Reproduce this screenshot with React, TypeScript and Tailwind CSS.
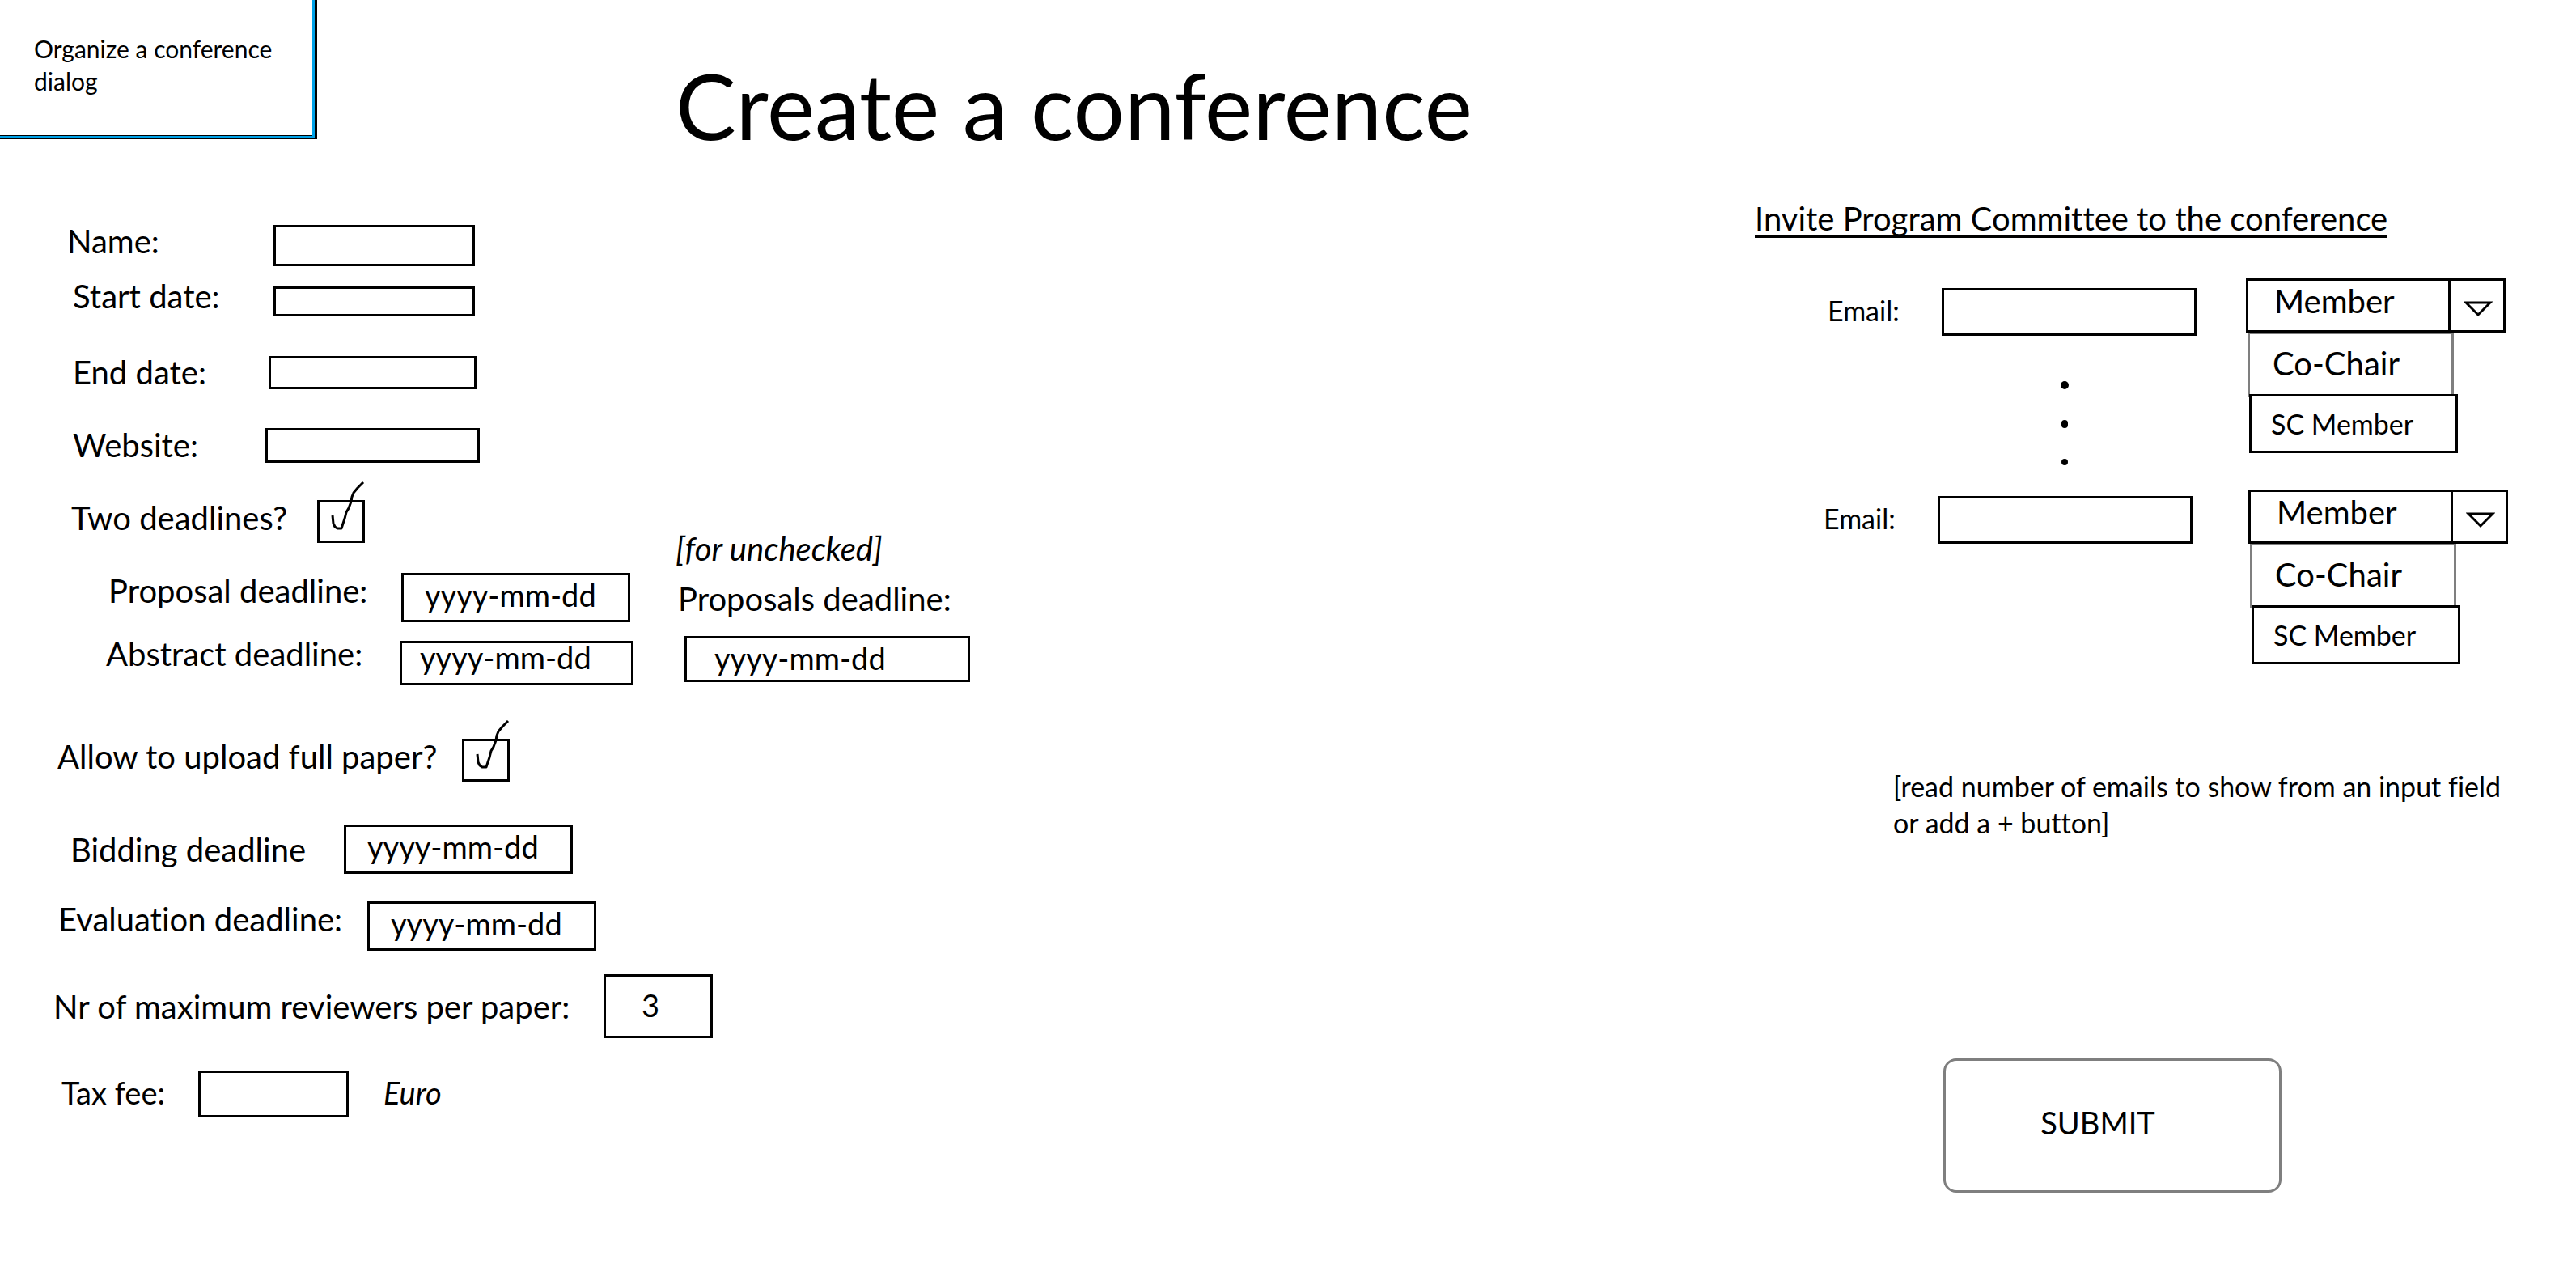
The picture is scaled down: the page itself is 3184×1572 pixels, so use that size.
import React from "react";

const box = "border-[3px] border-black bg-white outline-none";
const text = "text-[38px] leading-[44px]";
const labelText = "text-[40px] leading-[44px]";

type FieldProps = {
  id: string;
  label: string;
  row: string;
  labelWidth: string;
  input: string;
  placeholder?: string;
  value?: string;
};

function Field({ id, label, row, labelWidth, input, placeholder, value }: FieldProps) {
  return (
    <div className={`flex ${row}`}>
      <label htmlFor={id} className={`shrink-0 whitespace-nowrap ${labelText} ${labelWidth}`}>
        {label}
      </label>
      <input
        id={id}
        type="text"
        defaultValue={value}
        placeholder={placeholder}
        className={`${box} ${text} placeholder:text-black placeholder:opacity-100 ${input}`}
      />
    </div>
  );
}

function CheckField({ id, label, row, labelWidth }: { id: string; label: string; row: string; labelWidth: string }) {
  return (
    <div className={`flex items-start ${row}`}>
      <label htmlFor={id} className={`shrink-0 whitespace-nowrap ${labelText} ${labelWidth}`}>
        {label}
      </label>
      <div className="relative h-[53px] w-[59px]">
        <input id={id} type="checkbox" defaultChecked className={`peer block h-full w-full appearance-none ${box}`} />
        <svg
          viewBox="0 0 59 76"
          className="pointer-events-none invisible absolute bottom-0 left-0 h-[76px] w-[59px] peer-checked:visible"
          fill="none"
          stroke="black"
          strokeWidth="3"
          strokeLinejoin="round"
        >
          <path d="M19 42 L20 52 L22 56 L25 58 L30 58 L32 52 L34 46 L36 38 L39 33 L42 25 L43 19 L45 14 L50 8 L54 4 L57 1" />
        </svg>
      </div>
    </div>
  );
}

function RoleSelect({ id }: { id: string }) {
  return (
    <div className="w-[321px] shrink-0">
      <div className="relative">
        <select
          id={id}
          aria-label="Role"
          defaultValue="Member"
          className={`block h-[67px] w-full appearance-none pb-3 pl-8 ${box} ${labelText}`}
        >
          <option>Member</option>
          <option>Co-Chair</option>
          <option>SC Member</option>
        </select>
        <span className="pointer-events-none absolute inset-y-0 right-0 flex w-[71px] items-center justify-center border-l-[3px] border-black pt-2">
          <svg viewBox="0 0 36 20" className="h-5 w-9" fill="none" stroke="black" strokeWidth="3">
            <path d="M3 2 H33 L18 17 Z" />
          </svg>
        </span>
      </div>
      <ul role="listbox" aria-label="Roles">
        <li role="option" aria-selected="false" className={`-mt-px ml-0.5 flex h-[81px] w-[255px] items-center border-[3px] border-[#7f7f7f] pb-1 pl-7 ${labelText}`}>
          Co-Chair
        </li>
        <li role="option" aria-selected="false" className="relative -mt-1 ml-1 flex h-[73px] w-[258px] items-center border-[3px] border-black bg-white pl-6 text-[34px] leading-[44px]">
          SC Member
        </li>
      </ul>
    </div>
  );
}

function Invite({ id, row, email, gap, children }: { id: string; row: string; email: string; gap: string; children?: React.ReactNode }) {
  return (
    <div className={`flex items-start ${row} ${gap}`}>
      <div className={email}>
        <div className="flex items-center">
          <label htmlFor={id} className="w-[141px] pb-1 text-[34px] leading-[44px]">
            Email:
          </label>
          <input id={id} type="email" className={`h-[59px] w-[315px] px-4 text-[34px] ${box}`} />
        </div>
        {children}
      </div>
      <RoleSelect id={`${id}-role`} />
    </div>
  );
}

export default function App() {
  return (
    <main className="min-h-screen bg-white font-['Lato',sans-serif] text-black [font-variant-ligatures:none]">
      <header className="flex items-start">
        <div className="w-[392px] shrink-0 border-r-[3px] border-b border-black">
          <div className="border-r-[3px] border-b-[3px] border-[#00a2e8]">
            <p className="h-[168px] border-b border-black pt-10 pl-[42px] text-[30px] leading-10">
              Organize a conference
              <br />
              dialog
            </p>
          </div>
        </div>
        <h1 className="pt-[78px] pb-0.5 pl-[443px] text-[112px] leading-[104px]">Create a conference</h1>
      </header>

      <form className="flex items-start justify-between" onSubmit={(e) => e.preventDefault()}>
        <div className="pt-[92px]">
          <Field id="name" label="Name:" row="items-start pl-[83px]" labelWidth="w-[255px]" input="mt-0.5 h-[51px] w-[249px] px-2" />
          <Field id="start" label="Start date:" row="items-start mt-[15px] pl-[90px]" labelWidth="w-[248px]" input="mt-2.5 h-[37px] w-[249px] px-2" />
          <Field id="end" label="End date:" row="items-center mt-[47px] pl-[90px]" labelWidth="w-[242px]" input="h-[41px] w-[257px] px-2" />
          <Field id="website" label="Website:" row="items-center mt-[46px] pl-[90px]" labelWidth="w-[238px]" input="h-[43px] w-[265px] px-2" />

          <div className="mt-[46px] flex items-start">
            <div className="w-[835px]">
              <CheckField id="two" label="Two deadlines?" row="pl-[88px]" labelWidth="w-[304px]" />
              <Field id="proposal" label="Proposal deadline:" row="items-start mt-[37px] pl-[134px]" labelWidth="w-[362px]" input="h-[61px] w-[283px] pb-2 pl-[26px]" placeholder="yyyy-mm-dd" />
              <Field id="abstract" label="Abstract deadline:" row="items-start mt-[17px] pl-[131px]" labelWidth="w-[363px]" input="mt-1.5 h-[55px] w-[289px] pb-4 pl-[22px]" placeholder="yyyy-mm-dd" />
            </div>
            <div className="pt-[38px]">
              <p className={`italic ${labelText}`}>[for unchecked]</p>
              <div className="mt-[18px] flex flex-col pl-[3px]">
                <label htmlFor="proposals" className={labelText}>
                  Proposals deadline:
                </label>
                <input id="proposals" type="text" placeholder="yyyy-mm-dd" className={`mt-6 ml-2 h-[57px] w-[353px] pb-1 pl-[34px] placeholder:text-black placeholder:opacity-100 ${box} ${text}`} />
              </div>
            </div>
          </div>

          <CheckField id="upload" label="Allow to upload full paper?" row="mt-[66px] pl-[71px]" labelWidth="w-[500px]" />
          <Field id="bidding" label="Bidding deadline" row="items-center mt-[53px] pl-[87px]" labelWidth="w-[338px]" input="h-[61px] w-[283px] pb-2 pl-[26px]" placeholder="yyyy-mm-dd" />
          <Field id="evaluation" label="Evaluation deadline:" row="items-start mt-[34px] pl-[72px]" labelWidth="w-[382px]" input="h-[61px] w-[283px] pb-2 pl-[26px]" placeholder="yyyy-mm-dd" />
          <Field id="reviewers" label="Nr of maximum reviewers per paper:" row="items-center mt-[29px] pl-[66px]" labelWidth="w-[680px]" input="h-[79px] w-[135px] pb-1 pl-11" value="3" />
          <div className={`mt-[40px] flex items-center pl-[76px] ${text}`}>
            <label htmlFor="tax" className="w-[169px] pb-1">
              Tax fee:
            </label>
            <input id="tax" type="text" className={`h-[58px] w-[186px] px-3 ${box}`} />
            <span className="pb-1 pl-[43px] italic">Euro</span>
          </div>
        </div>

        <section className="w-[1015px] shrink-0 pt-[65px]">
          <h2 className="w-fit border-b-[3px] border-black text-[40px] leading-[42px] whitespace-nowrap">Invite Program Committee to the conference</h2>
          <Invite id="email-first" row="mt-[50px] pl-[90px]" email="pt-3" gap="gap-[61px]">
            <div className="flex flex-col items-center gap-[38px] pt-14 pl-[129px]" aria-hidden="true">
              <span className="h-2.5 w-2.5 rounded-full bg-black" />
              <span className="h-2.5 w-2 rounded-full bg-black" />
              <span className="h-2 w-2 rounded-full bg-black" />
            </div>
          </Invite>
          <Invite id="email-last" row="mt-[30px] pl-[85px]" email="pt-2" gap="gap-[69px]" />
          <p className="mt-32 ml-[171px] text-[34px] leading-[45px] whitespace-nowrap">
            [read number of emails to show from an input field
            <br />
            or add a + button]
          </p>
          <button type="submit" className={`mt-[269px] ml-[233px] block h-[166px] w-[418px] rounded-2xl border-[3px] border-[#7f7f7f] pr-9 pb-2 ${text}`}>
            SUBMIT
          </button>
        </section>
      </form>
    </main>
  );
}
